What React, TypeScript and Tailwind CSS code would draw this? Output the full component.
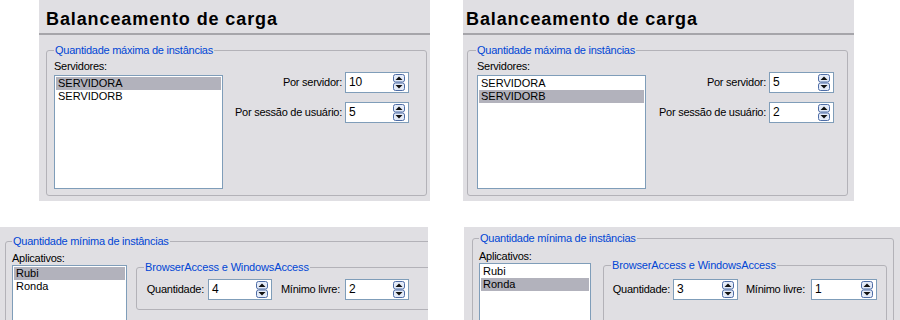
import React from "react";

const font = "font-['Liberation_Sans',Arial,sans-serif]";

const Spinner = () => (
      <svg width="12" height="17" viewBox="0 0 12 17" className="shrink-0">
            <rect x="0.5" y="0.5" width="11" height="7.5" rx="2" fill="#e4ebf8" stroke="#4f6da6" />
            <rect x="0.5" y="9" width="11" height="7.5" rx="2" fill="#e4ebf8" stroke="#4f6da6" />
            <path d="M2.5 6 L6 2.5 L9.5 6 Z" fill="#111" />
            <path d="M2.5 11 L6 14.5 L9.5 11 Z" fill="#111" />
      </svg>
);

const SpinBox = ({ value, width = 64 }: { value: string; width?: number }) => (
      <div
            className={`h-[21px] border border-[#7f9db9] bg-white flex items-center justify-between pl-[3px] pr-[3px] text-[12px] text-black ${
                  width === 64 ? "w-[64px]" : width === 65 ? "w-[65px]" : "w-[66px]"
            }`}
      >
            <span className="-mt-[2px]">{value}</span>
            <Spinner />
      </div>
);

const ListBox = ({
      items,
      selected,
      className,
}: {
      items: string[];
      selected: number;
      className: string;
}) => (
      <div className={`border border-[#7f9db9] bg-white pt-[1px] px-[1px] ${className}`}>
            {items.map((item, i) => (
                  <div
                        key={item}
                        className={`h-[13px] leading-[13px] pl-[2px] text-[11px] text-black ${
                              i === selected ? "bg-[#b2b2bc]" : ""
                        }`}
                  >
                        {item}
                  </div>
            ))}
      </div>
);

const Legend = ({ children, className }: { children: React.ReactNode; className: string }) => (
      <legend className={`px-[1px] text-[11px] leading-[14px] text-[#0046d5] ${className}`}>
            {children}
      </legend>
);

const TopPanel = ({
      right,
      selected,
      perServer,
      perSession,
}: {
      right?: boolean;
      selected: number;
      perServer: string;
      perSession: string;
}) => (
      <div className={`w-[391px] h-[201px] bg-[#e0dfe3] ${font}`}>
            <div
                  className={`h-[35px] border-b-2 border-[#a6a5aa] pt-[9px] text-[18px] leading-[21px] font-bold tracking-[0.9px] text-black ${
                        right ? "pl-[3px]" : "pl-[7px]"
                  }`}
            >
                  Balanceamento de carga
            </div>
            <fieldset
                  className={`mt-[8px] w-[381px] border border-[#b3b2b8] rounded-[3px] pb-[6px] ${
                        right ? "ml-[4px]" : "ml-[7px]"
                  }`}
            >
                  <Legend className={`tracking-[-0.25px] ${right ? "ml-[8px]" : "ml-[7px]"}`}>
                        Quantidade máxima de instâncias
                  </Legend>
                  <div className={`flex ${right ? "pl-[9px] pr-[13px]" : "pl-[7px] pr-[17px]"}`}>
                        <div>
                              <div className="pt-[3px] h-[18px] leading-[13px] text-[11px] tracking-[-0.25px] text-black">
                                    Servidores:
                              </div>
                              <ListBox
                                    items={["SERVIDORA", "SERVIDORB"]}
                                    selected={selected}
                                    className="w-[169px] h-[114px]"
                              />
                        </div>
                        <div className="flex-1 flex flex-col items-end gap-[9px] pt-[15px] text-[11px] tracking-[-0.25px] text-black">
                              <div className="flex items-center gap-[3px]">
                                    <span>Por servidor:</span>
                                    <SpinBox value={perServer} width={right ? 65 : 64} />
                              </div>
                              <div className="flex items-center gap-[3px]">
                                    <span>Por sessão de usuário:</span>
                                    <SpinBox value={perSession} width={right ? 65 : 64} />
                              </div>
                        </div>
                  </div>
            </fieldset>
      </div>
);

const BottomLeft = () => (
      <div className={`w-[428px] h-[93px] bg-[#e0dfe3] overflow-hidden pt-[7px] ${font}`}>
            <fieldset className="ml-[5px] w-[440px] h-[140px] border border-[#b3b2b8] rounded-[3px]">
                  <Legend className="ml-[6px] tracking-[-0.25px]">Quantidade mínima de instâncias</Legend>
                  <div className="flex pl-[6px]">
                        <div>
                              <div className="pt-[4px] h-[17px] leading-[13px] text-[11px] tracking-[-0.25px] text-black">
                                    Aplicativos:
                              </div>
                              <ListBox items={["Rubi", "Ronda"]} selected={0} className="w-[115px] h-[80px]" />
                        </div>
                        <fieldset className="mt-[12px] ml-[9px] w-[300px] h-[50px] border border-[#b3b2b8] rounded-[3px] pb-[8px]">
                              <Legend className="ml-[7px] tracking-[-0.15px]">BrowserAccess e WindowsAccess</Legend>
                              <div className="flex items-center mt-[5px] text-[11px] tracking-[-0.25px] text-black">
                                    <span className="w-[71px] text-right pr-[4px]">Quantidade:</span>
                                    <SpinBox value="4" width={64} />
                                    <span className="w-[73px] text-right pr-[5px]">Mínimo livre:</span>
                                    <SpinBox value="2" width={64} />
                              </div>
                        </fieldset>
                  </div>
            </fieldset>
      </div>
);

const BottomRight = () => (
      <div className={`w-[436px] h-[93px] bg-[#e0dfe3] overflow-hidden pt-[4px] ${font}`}>
            <fieldset className="ml-[8px] w-[422px] h-[140px] border border-[#b3b2b8] rounded-[3px]">
                  <Legend className="ml-[6px] tracking-[-0.25px]">Quantidade mínima de instâncias</Legend>
                  <div className="flex pl-[6px]">
                        <div>
                              <div className="pt-[5px] h-[18px] leading-[13px] text-[11px] tracking-[-0.25px] text-black">
                                    Aplicativos:
                              </div>
                              <ListBox items={["Rubi", "Ronda"]} selected={1} className="w-[112px] h-[80px]" />
                        </div>
                        <fieldset className="mt-[13px] ml-[12px] w-[284px] border border-[#b3b2b8] rounded-[3px] pb-[7px]">
                              <Legend className="ml-[7px] tracking-[-0.15px]">BrowserAccess e WindowsAccess</Legend>
                              <div className="flex items-center mt-[7px] text-[11px] tracking-[-0.25px] text-black">
                                    <span className="w-[69px] text-right pr-[3px]">Quantidade:</span>
                                    <SpinBox value="3" width={65} />
                                    <span className="w-[73px] text-right pr-[6px]">Mínimo livre:</span>
                                    <SpinBox value="1" width={66} />
                              </div>
                        </fieldset>
                  </div>
            </fieldset>
      </div>
);

export default function App() {
      return (
            <div className="w-[900px] h-[320px] bg-white overflow-hidden">
                  <div className="flex pl-[39px] gap-[33px]">
                        <TopPanel selected={0} perServer="10" perSession="5" />
                        <TopPanel right selected={1} perServer="5" perSession="2" />
                  </div>
                  <div className="flex mt-[26px] gap-[36px]">
                        <BottomLeft />
                        <BottomRight />
                  </div>
            </div>
      );
}
